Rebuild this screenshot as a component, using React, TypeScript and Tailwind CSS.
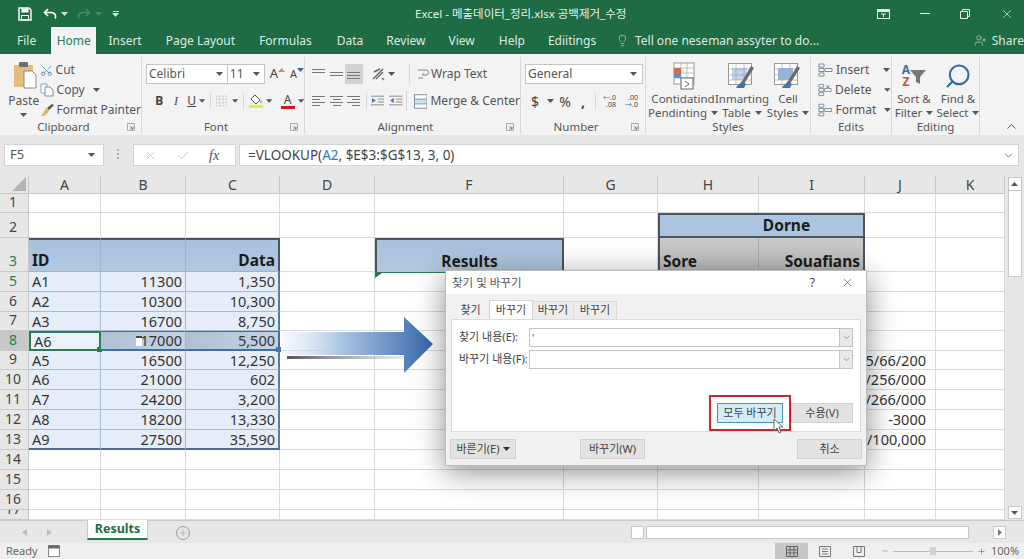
import React from 'react';
import { Scissors, Lightbulb, UserPlus, Search, ChevronUp, ChevronDown, Check, X, Minus, Plus } from 'lucide-react';

const Caret = ({ className = '', color = '#555' }: { className?: string; color?: string }) => (
  <svg width="7" height="4" viewBox="0 0 7 4" className={className}>
    <path d="M0 0h7L3.5 4z" fill={color} />
  </svg>
);

const Lines = ({ rows }: { rows: number[][] }) => (
  <svg width="14" height="12" viewBox="0 0 14 12">
    {rows.map(([x, w], i) => (
      <rect key={i} x={x} y={i * 3 + 1} width={w} height="1" fill="#777" />
    ))}
  </svg>
);

const Launcher = () => (
  <svg width="8" height="8" viewBox="0 0 8 8">
    <path d="M0.5 0.5h7v7h-7z" fill="none" stroke="#aaa" />
    <path d="M3 3l3 3M6 3.5V6H3.5" fill="none" stroke="#777" />
  </svg>
);

const Group = ({ className, label, launcher, children }: { className: string; label: string; launcher?: boolean; children: React.ReactNode }) => (
  <div className={`flex flex-col h-[77px] mt-[3px] border-r border-[#d8d8d8] shrink-0 ${className}`}>
    <div className="h-[63px] overflow-visible">{children}</div>
    <div className="h-[14px] flex items-center">
      <span className="flex-1 text-center text-[11.5px] leading-none text-[#555]">{label}</span>
      {launcher && (
        <span className="w-[14px] flex justify-start">
          <Launcher />
        </span>
      )}
    </div>
  </div>
);

const Stacked = ({ icon, lines, className }: { icon: React.ReactNode; lines: React.ReactNode[]; className: string }) => (
  <div className={`flex flex-col items-center shrink-0 ${className}`}>
    <div className="h-[33px] flex items-center">{icon}</div>
    {lines.map((l, i) => (
      <div key={i} className="h-[14px] flex items-center gap-[4px] text-[11.5px] leading-none text-[#555] whitespace-nowrap">
        {l}
      </div>
    ))}
  </div>
);

const TableGlyph = ({ accent }: { accent: string }) => (
  <svg width="30" height="28" viewBox="0 0 30 28">
    <rect x="1.5" y="1.5" width="23" height="21" fill="#fff" stroke="#999" />
    <rect x="5" y="6" width="15" height="12" fill={accent} />
    <path d="M1.5 7h23M1.5 13h23M1.5 18h23M9 1.5v21M17 1.5v21" stroke="#aaa" strokeWidth="0.7" />
    <path d="M27 6L15 25l-6 0 5-4 10-17z" fill="#6b6b6b" />
    <path d="M9 26l6-7 4 3-2 4z" fill="#3f74b5" />
  </svg>
);

const tabs = [
  ['Insert', 'ml-[12px]'],
  ['Page Layout', 'ml-[24px]'],
  ['Formulas', 'ml-[24px]'],
  ['Data', 'ml-[25px]'],
  ['Review', 'ml-[23px]'],
  ['View', 'ml-[23px]'],
  ['Help', 'ml-[24px]'],
  ['Ediitings', 'ml-[23px]'],
];

const TitleBar = () => (
  <div className="h-[27px] bg-[#1f6b43] flex items-center text-white shrink-0">
    <svg width="14" height="14" viewBox="0 0 14 14" className="ml-[18px]">
      <path d="M1 1h10l2 2v10H1z" fill="none" stroke="#fff" strokeWidth="1.4" />
      <rect x="3.5" y="1.5" width="7" height="4" fill="#fff" />
      <rect x="3.5" y="8.5" width="7" height="4.5" fill="none" stroke="#fff" />
    </svg>
    <svg width="14" height="14" viewBox="0 0 14 14" className="ml-[11px]">
      <path d="M5 2L1.5 5.5 5 9M2 5.5h6.5a4 4 0 0 1 3.5 6" fill="none" stroke="#fff" strokeWidth="1.6" />
    </svg>
    <Caret color="#cfe3d7" className="ml-[4px]" />
    <svg width="14" height="14" viewBox="0 0 14 14" className="ml-[9px]">
      <path d="M9 2l3.5 3.5L9 9M12 5.500H5.500a4 4 0 0 0-3.500 6" fill="none" stroke="#4f8a68" strokeWidth="1.6" />
    </svg>
    <Caret color="#4f8a68" className="ml-[4px]" />
    <span className="ml-[10px] flex flex-col items-center gap-[1px]">
      <span className="w-[6px] h-[1px] bg-[#cfe3d7]" />
      <Caret color="#cfe3d7" />
    </span>
    <span className="ml-[296px] text-[11.5px] text-[#e6f0ea] whitespace-nowrap w-[210px]">Excel - 메출데이터_정리.xlsx 공백제거_수정</span>
    <svg width="13" height="10" viewBox="0 0 13 10" className="ml-[252px]">
      <rect x="0.500" y="0.500" width="12" height="9" fill="none" stroke="#e6f0ea" />
      <rect x="0.500" y="0.500" width="12" height="2.500" fill="#e6f0ea" />
      <path d="M4 5h5M6.500 5v3" stroke="#e6f0ea" />
    </svg>
    <span className="ml-[30px] w-[10px] h-[1px] bg-[#e6f0ea]" />
    <svg width="10" height="10" viewBox="0 0 10 10" className="ml-[30px]">
      <path d="M2.500 2.500V.5h7v7h-2M.5 2.500h7v7h-7z" fill="none" stroke="#e6f0ea" />
    </svg>
    <X size={14} strokeWidth={1.2} className="ml-[30px] text-[#e6f0ea]" />
  </div>
);

const TabRow = () => (
  <div className="h-[27px] bg-[#1f6b43] flex items-stretch text-[12px] text-[#dcebe2] shrink-0">
    <span className="ml-[17px] w-[40px] flex items-center">File</span>
    <span className="w-[53px] bg-[#f3f3f3] text-[#2c7a50] flex items-center justify-center">Home</span>
    {tabs.map(([t, cls]) => (
      <span key={t} className={`flex items-center whitespace-nowrap ${cls}`}>
        {t}
      </span>
    ))}
    <Lightbulb size={15} strokeWidth={1.1} className="ml-[20px] self-center" />
    <span className="ml-[6px] flex items-center whitespace-nowrap w-[164px]">Tell one neseman assyter to do...</span>
    <UserPlus size={15} strokeWidth={1.1} className="ml-[175px] self-center" />
    <span className="ml-[5px] flex items-center">Share</span>
  </div>
);

const Ribbon = () => (
  <div className="h-[81px] bg-[#f3f3f3] flex shrink-0 text-[#555]">
    <Group className="w-[142px]" label="Clipboard" launcher>
      <div className="flex pl-[8px]">
        <div className="w-[36px] flex flex-col items-center">
          <svg width="26" height="28" viewBox="0 0 26 28" className="mt-[4px]">
            <rect x="3" y="4" width="19" height="22" rx="1" fill="#e6bc7c" />
            <rect x="8" y="1" width="9" height="5" rx="1" fill="#6e6e6e" />
            <path d="M13 10h8l4 4v13H13z" fill="#fff" stroke="#8a8a8a" />
          </svg>
          <span className="text-[12px] leading-none mt-[6px]">Paste</span>
          <Caret className="mt-[6px]" />
        </div>
        <div className="ml-[0px] flex flex-col text-[12px] leading-none pt-[3px]">
          <div className="h-[20px] flex items-center gap-[3px]">
            <Scissors size={13} strokeWidth={1.4} className="text-[#4d7ea8] -rotate-90" />
            <span>Cut</span>
          </div>
          <div className="h-[20px] flex items-center gap-[3px]">
            <svg width="14" height="14" viewBox="0 0 14 14">
              <path d="M1 1h6v9H1z" fill="#fff" stroke="#8aa5bd" />
              <path d="M5 4h5l3 3v6H5z" fill="#fff" stroke="#7a8a99" />
            </svg>
            <span>Copy</span>
            <Caret className="ml-[5px]" />
          </div>
          <div className="h-[19px] flex items-center gap-[2px]">
            <svg width="15" height="14" viewBox="0 0 15 14">
              <path d="M1 13c4 0 7-2 8-6L6 5C5 8 3 10 1 13z" fill="#e2b36b" />
              <path d="M7 5l2 2 5-5-2-1z" fill="#555" />
            </svg>
            <span className="whitespace-nowrap">Format Painter</span>
          </div>
        </div>
      </div>
    </Group>

    <Group className="w-[163px]" label="Font" launcher>
      <div className="pt-[7px] pl-[4px]">
        <div className="flex items-center h-[20px]">
          <div className="w-[82px] h-[20px] bg-white border border-[#c4c4c4] flex items-center justify-between px-[2px] text-[12px]">
            <span>Celibri</span>
            <Caret className="mr-[2px]" />
          </div>
          <div className="w-[37px] h-[20px] bg-white border border-l-0 border-[#c4c4c4] flex items-center justify-between px-[2px] text-[12px]">
            <span>11</span>
            <Caret className="mr-[2px]" />
          </div>
          <span className="ml-[5px] text-[13px] text-[#444]">A</span>
          <Caret color="#c99a3c" className="rotate-180 -mt-[8px]" />
          <span className="ml-[5px] text-[11px] text-[#444]">A</span>
          <Caret color="#2c6aa5" className="-mt-[8px]" />
        </div>
        <div className="flex items-center h-[18px] mt-[8px] text-[12px] text-[#444]">
          <span className="ml-[7px] w-[14px] font-bold text-center">B</span>
          <span className="ml-[4px] w-[14px] italic text-center [font-family:'Liberation_Serif',serif]">I</span>
          <span className="ml-[3px] w-[14px] underline text-center">U</span>
          <Caret className="ml-[1px]" />
          <span className="ml-[5px] w-[1px] h-[16px] bg-[#d6d6d6]" />
          <svg width="12" height="12" viewBox="0 0 12 12" className="ml-[5px]">
            <path d="M.5.5h11v11H.5zM4 .5v11M8 .5v11M.5 4h11M.5 8h11" fill="#f6f6f6" stroke="#bbb" strokeDasharray="1 1" />
          </svg>
          <Caret className="ml-[5px]" />
          <span className="ml-[5px] w-[1px] h-[16px] bg-[#d6d6d6]" />
          <span className="ml-[5px] flex flex-col items-center">
            <svg width="14" height="11" viewBox="0 0 14 11">
              <path d="M6 1l5 5-4 4-5-5z" fill="#fff" stroke="#555" />
              <path d="M12 6c1 2 1 3 0 3s-1-1 0-3z" fill="#4d7ea8" />
            </svg>
            <span className="w-[14px] h-[3px] bg-[#f2e14a]" />
          </span>
          <Caret className="ml-[3px]" />
          <span className="ml-[8px] flex flex-col items-center leading-none">
            <span className="text-[12px] leading-[12px]">A</span>
            <span className="w-[14px] h-[3px] bg-[#d2191f]" />
          </span>
          <Caret className="ml-[3px]" />
        </div>
      </div>
    </Group>

    <Group className="w-[216px]" label="Alignment" launcher>
      <div className="pt-[7px]">
        <div className="flex items-center h-[20px]">
          <span className="ml-[7px]"><Lines rows={[[0, 13], [0, 13], [0, 0]]} /></span>
          <span className="ml-[4px]"><Lines rows={[[0, 0], [0, 13], [0, 13]]} /></span>
          <span className="ml-[1px] w-[18px] h-[20px] bg-[#d2d2d2] flex items-center justify-center"><Lines rows={[[0, 0], [0, 13], [0, 13], [0, 13]]} /></span>
          <svg width="14" height="14" viewBox="0 0 14 14" className="ml-[8px]">
            <path d="M2 12L12 2M5 12l7-7M3 5l6-3" fill="none" stroke="#666" strokeWidth="1.4" />
            <path d="M11 11l2 2" stroke="#4d7ea8" strokeWidth="1.5" />
          </svg>
          <Caret className="ml-[3px]" />
          <span className="ml-[14px] w-[1px] h-[20px] bg-[#d6d6d6]" />
          <svg width="13" height="14" viewBox="0 0 13 14" className="ml-[7px]">
            <path d="M1 3h8a2 2 0 0 1 0 5H5l2-1.500M1 11h5" fill="none" stroke="#888" />
          </svg>
          <span className="ml-[1px] text-[12px] whitespace-nowrap">Wrap Text</span>
        </div>
        <div className="flex items-center h-[18px] mt-[8px]">
          <span className="ml-[7px]"><Lines rows={[[0, 13], [0, 8], [0, 13], [0, 8]]} /></span>
          <span className="ml-[4px]"><Lines rows={[[0, 13], [3, 8], [0, 13], [3, 8]]} /></span>
          <span className="ml-[3px]"><Lines rows={[[0, 13], [5, 8], [0, 13], [5, 8]]} /></span>
          <span className="ml-[5px] w-[1px] h-[16px] bg-[#d6d6d6]" />
          <svg width="14" height="12" viewBox="0 0 14 12" className="ml-[4px]">
            <path d="M0 1h14M7 4h7M7 7h7M0 10h14" stroke="#888" />
            <path d="M1 3l4 2.500L1 8z" fill="#3f7ab5" />
          </svg>
          <svg width="14" height="12" viewBox="0 0 14 12" className="ml-[5px]">
            <path d="M0 1h14M7 4h7M7 7h7M0 10h14" stroke="#888" />
            <path d="M5 3L1 5.500 5 8z" fill="#3f7ab5" />
          </svg>
          <span className="ml-[3px] w-[1px] h-[20px] bg-[#d6d6d6]" />
          <svg width="14" height="15" viewBox="0 0 14 15" className="ml-[7px]">
            <rect x=".5" y=".5" width="13" height="14" fill="#fff" stroke="#888" />
            <rect x=".5" y="5" width="13" height="5" fill="#cfe0ef" stroke="#6f9cc4" />
          </svg>
          <span className="ml-[3px] text-[12px] whitespace-nowrap">Merge &amp; Center</span>
        </div>
      </div>
    </Group>

    <Group className="w-[125px]" label="Number" launcher>
      <div className="pt-[7px] pl-[4px]">
        <div className="w-[118px] h-[20px] bg-white border border-[#c4c4c4] flex items-center justify-between px-[2px] text-[12px]">
          <span>General</span>
          <Caret className="mr-[3px]" />
        </div>
        <div className="flex items-center h-[18px] mt-[8px] text-[#444]">
          <span className="ml-[5px] w-[10px] text-[14px] text-center">$</span>
          <Caret className="ml-[7px]" />
          <span className="ml-[4px] text-[14px] w-[14px] text-center">%</span>
          <span className="ml-[9px] text-[14px] font-bold w-[6px]">,</span>
          <span className="ml-[8px] w-[1px] h-[16px] bg-[#d6d6d6]" />
          <span className="ml-[6px] w-[14px] text-[7px] leading-[7px] text-right"><span className="text-[#3f7ab5]">←</span>.0<br />.08</span>
          <span className="ml-[8px] w-[14px] text-[7px] leading-[7px] text-right">.00<br /><span className="text-[#3f7ab5]">→</span>.0</span>
        </div>
      </div>
    </Group>

    <Group className="w-[165px]" label="Styles">
      <div className="flex pl-[3px] pt-[2px]">
        <Stacked
          className="w-[68px]"
          icon={
            <svg width="30" height="30" viewBox="0 0 30 30">
              <rect x="6" y="2" width="20" height="21" fill="#fff" stroke="#999" />
              <path d="M6 7h20M6 12h20M6 17h20M13 2v21M19 2v21" stroke="#aaa" strokeWidth=".7" />
              <rect x="6" y="7" width="7" height="5" fill="#d9694a" />
              <rect x="6" y="12" width="7" height="5" fill="#5b8fc5" />
              <rect x="13" y="17" width="12" height="11" fill="#fff" stroke="#666" />
              <path d="M17 20l4 3-4 3" fill="none" stroke="#666" />
            </svg>
          }
          lines={['Contidatind', <>Pendinting <Caret /></>]}
        />
        <Stacked className="w-[50px]" icon={<TableGlyph accent="#bcd3ea" />} lines={['Inmarting', <>Table <Caret /></>]} />
        <Stacked className="w-[42px]" icon={<TableGlyph accent="#8fb7de" />} lines={['Cell', <>Styles <Caret /></>]} />
      </div>
    </Group>

    <Group className="w-[81px]" label="Edits">
      <div className="pl-[7px] pt-[3px] text-[12px] leading-none">
        {[
          ['Insert', 'ml-[11px]'],
          ['Delete', 'ml-[10px]'],
          ['Format', 'ml-[5px]'],
        ].map(([t, cls]) => (
          <div key={t} className="h-[20px] flex items-center gap-[3px]">
            <svg width="15" height="14" viewBox="0 0 15 14">
              <path d="M1 1h5v3H1zM1 5.500h5v3H1zM1 10h5v3H1zM7 5.500h7v3H7z" fill="#fff" stroke="#7a8a99" />
              {t === 'Delete' && <path d="M9 2l3 3M12 2L9 5" stroke="#c9423a" />}
            </svg>
            <span>{t}</span>
            <Caret className={cls} />
          </div>
        ))}
      </div>
    </Group>

    <Group className="w-[88px]" label="Editing">
      <div className="flex pt-[2px]">
        <Stacked
          className="w-[44px]"
          icon={
            <span className="flex items-center">
              <span className="flex flex-col items-center text-[12px] leading-[12px] font-bold">
                <span className="text-[#3570ad]">A</span>
                <span className="text-[#c0504d]">Z</span>
              </span>
              <svg width="16" height="16" viewBox="0 0 16 16">
                <path d="M0 2h16L10 9v7l-4-2V9z" fill="#777" />
              </svg>
            </span>
          }
          lines={['Sort &', <>Filter <Caret /></>]}
        />
        <Stacked
          className="w-[44px]"
          icon={<Search size={28} strokeWidth={1.8} className="text-[#2d6ca8] -scale-x-100" />}
          lines={['Find &', <>Select <Caret /></>]}
        />
      </div>
    </Group>

    <div className="flex-1 flex items-end justify-end pr-[5px] pb-[1px]">
      <ChevronUp size={15} strokeWidth={1.6} className="text-[#555]" />
    </div>
  </div>
);

const FormulaBar = () => (
  <div className="h-[41px] bg-[#e7e7e7] flex items-start pt-[9px] shrink-0">
    <div className="ml-[4px] w-[100px] h-[22px] bg-white border border-[#d4d4d4] flex items-center justify-between px-[5px] text-[13px] text-[#555]">
      <span>F5</span>
      <Caret className="mr-[3px]" />
    </div>
    <span className="ml-[13px] mt-[5px] flex flex-col gap-[2px]">
      <span className="w-[2px] h-[2px] bg-[#aaa]" />
      <span className="w-[2px] h-[2px] bg-[#aaa]" />
      <span className="w-[2px] h-[2px] bg-[#aaa]" />
    </span>
    <div className="ml-[14px] w-[103px] h-[22px] bg-white border border-[#d4d4d4] flex items-center">
      <X size={15} strokeWidth={1.5} className="ml-[9px] text-[#c4c4c4]" />
      <Check size={15} strokeWidth={1.5} className="ml-[18px] text-[#c4c4c4]" />
      <span className="ml-[18px] text-[14px] italic text-[#555] [font-family:'Liberation_Serif',serif]">fx</span>
    </div>
    <div className="ml-[3px] w-[780px] h-[22px] bg-white border border-[#d4d4d4] flex items-center justify-between pl-[8px] pr-[3px] text-[13.500px] text-[#444]">
      <span>
        =VLOOKUP(<span className="text-[#2f78b5]">A2</span>, $E$3:$G$13, 3, 0)
      </span>
      <ChevronDown size={13} strokeWidth={1.6} className="text-[#666]" />
    </div>
  </div>
);

const columns = [
  ['A', ''],
  ['B', ''],
  ['C', ''],
  ['D', ''],
  ['F', 'text-[#1f7a4a]'],
  ['G', ''],
  ['H', ''],
  ['I', ''],
  ['J', ''],
  ['K', ''],
];

const rowLabels = ['1', '2', '3', '5', '6', '7', '8', '9', '10', '11', '12', '13', '14', '15', '16', '17'];

const tableRows: Record<string, string[]> = {
  '5': ['A1', '11300', '1,350'],
  '6': ['A2', '10300', '10,300'],
  '7': ['A3', '16700', '8,750'],
  '8': ['A6', '17000', '5,500'],
  '9': ['A5', '16500', '12,250'],
  '10': ['A6', '21000', '602'],
  '11': ['A7', '24200', '3,200'],
  '12': ['A8', '18200', '13,330'],
  '13': ['A9', '27500', '35,590'],
};

const jValues: Record<string, string> = {
  '9': '5/66/200',
  '10': '/256/000',
  '11': '/266/000',
  '12': '-3000',
  '13': '/100,000',
};

const plain = 'border-r border-b border-[#d9d9d9] bg-white';
const head = 'bg-gradient-to-b from-[#a8c1dd] to-[#b2c8e0] border-b border-[#9fb3c9] border-t-2 border-t-[#4a5560] flex items-end pb-[1px] px-[3px] text-[15.500px] font-bold leading-[20px] text-[#1c1c1c]';
const grey = 'bg-gradient-to-b from-[#cbcbcb] to-[#b9b9b9] flex items-end pb-[1px] px-[3px] text-[15.500px] font-bold leading-[20px] text-[#1c1c1c]';

const tableCell = (row: string, col: number) => {
  const last = row === '13';
  if (row === '8') {
    if (col === 0) return 'relative bg-[#eaf1fa] border-2 border-[#2a7d50]';
    return `relative bg-gradient-to-r from-[#afc0d6] to-[#c4d2e3] border-t border-b-2 border-[#3f6ea5] ${col === 2 ? 'border-r-2' : 'border-r border-r-[#a5b6ca]'}`;
  }
  return `bg-[#e5edf8] border-b ${last ? 'border-b-2 border-b-[#4c6c90]' : 'border-b-[#aabbcf]'} ${col === 2 ? 'border-r-2 border-r-[#5a7a9c]' : 'border-r border-r-[#a9bbd0]'}`;
};

const Sheet = () => (
  <div className="h-[344px] flex bg-[#e7e7e7] shrink-0 overflow-hidden">
    <div className="w-[1005px] grid grid-cols-[29px_72px_85px_94px_95px_189px_94px_101px_106px_71px_69px] grid-rows-[18px_19px_25px_34px_20px_20px_19px_20px_19px_20px_20px_20px_20px_20px_20px_20px_10px]">
      <div className="bg-[#e7e7e7] border-r border-b border-[#c8c8c8] flex items-end justify-end p-[2px]">
        <svg width="14" height="14" viewBox="0 0 14 14">
          <path d="M14 0v14H0z" fill="#b4b4b4" />
        </svg>
      </div>
      {columns.map(([c, cls]) => (
        <div key={c} className={`bg-[#e7e7e7] border-r border-b border-[#c8c8c8] flex items-center justify-center text-[14px] leading-none text-[#444] ${cls}`}>
          {c}
        </div>
      ))}
      {rowLabels.map((r) => {
        const green = r === '3' || r === '5' || r === '8';
        const rowHead = `border-r border-b border-[#c8c8c8] flex items-end justify-center pr-[2px] pb-[1px] text-[14px] leading-[18px] overflow-hidden ${r === '8' ? 'bg-[#c8c8c8]' : 'bg-[#e7e7e7]'} ${green ? 'text-[#2a7d50]' : 'text-[#444]'}`;
        const data = tableRows[r];
        return (
          <React.Fragment key={r}>
            <div className={rowHead}>{r}</div>
            {r === '3' ? (
              <>
                <div className={`${head} border-r border-r-[#9fb3c9]`}>ID</div>
                <div className={`${head} border-r border-r-[#9fb3c9]`} />
                <div className={`${head} border-r-2 border-r-[#4a5560] justify-end`}>Data</div>
              </>
            ) : data ? (
              data.map((t, i) => (
                <div key={i} className={`flex items-center px-[3px] text-[14.500px] leading-none text-[#333] ${i ? 'justify-end' : ''} ${tableCell(r, i)}`}>
                  {r === '8' && i === 1 && <span className="w-[6px] h-[10px] bg-white border-t-2 border-[#444] mr-[-1px]" />}
                  {t}
                  {r === '8' && i === 0 && <span className="absolute -right-[3px] -bottom-[3px] w-[5px] h-[5px] bg-[#2a7d50]" />}
                  {r === '8' && i === 2 && <span className="absolute -right-[3px] -bottom-[3px] w-[5px] h-[5px] bg-[#4b76ad]" />}
                </div>
              ))
            ) : (
              <>
                <div className={plain} />
                <div className={plain} />
                <div className={plain} />
              </>
            )}
            <div className={plain} />
            {r === '3' ? (
              <div className="bg-gradient-to-b from-[#a8c1dd] to-[#b2c8e0] border-2 border-b-0 border-[#4a5560] flex items-end justify-center pb-[1px] text-[15.500px] font-bold leading-[20px] text-[#1c1c1c]">Results</div>
            ) : r === '5' ? (
              <div className={`relative ${plain} border-t border-t-[#2a7d50]`}>
                <svg width="7" height="5" viewBox="0 0 7 5" className="absolute left-0 top-0">
                  <path d="M0 0h7L0 5z" fill="#1f7a4a" />
                </svg>
              </div>
            ) : (
              <div className={plain} />
            )}
            <div className={plain} />
            {r === '2' ? (
              <div className="col-span-2 bg-[#abc4e0] border-2 border-[#4a5560] flex items-center justify-center pl-[50px] text-[15.500px] font-bold text-[#1c1c1c]">Dorne</div>
            ) : r === '3' ? (
              <>
                <div className={`${grey} border-l-2 border-l-[#4a5560] border-r border-r-[#a8a8a8]`}>Sore</div>
                <div className={`${grey} border-r-2 border-r-[#4a5560] justify-end`}>Souafians</div>
              </>
            ) : (
              <>
                <div className={plain} />
                <div className={plain} />
              </>
            )}
            <div className={`${plain} flex items-center justify-end pr-[9px] text-[14.500px] leading-none text-[#333] whitespace-nowrap`}>{jValues[r]}</div>
            <div className={plain} />
          </React.Fragment>
        );
      })}
    </div>
    <div className="w-[19px] flex flex-col items-center pt-[1px] pb-[1px]">
      <div className="w-[14px] h-[14px] bg-white border border-[#c8c8c8] flex items-center justify-center">
        <Caret className="rotate-180" />
      </div>
      <div className="w-[14px] h-[86px] bg-white border border-[#c8c8c8] border-t-0" />
      <div className="flex-1" />
      <div className="w-[14px] h-[13px] bg-white border border-[#c8c8c8] flex items-center justify-center">
        <Caret />
      </div>
    </div>
  </div>
);

const SheetTabs = () => (
  <div className="h-[23px] bg-[#e7e7e7] flex items-start shrink-0 border-t border-[#c8c8c8]">
    <svg width="5" height="7" viewBox="0 0 5 7" className="ml-[22px] mt-[8px]"><path d="M5 0v7L0 3.500z" fill="#bbb" /></svg>
    <svg width="5" height="7" viewBox="0 0 5 7" className="ml-[20px] mt-[8px]"><path d="M0 0v7l5-3.500z" fill="#bbb" /></svg>
    <div className="ml-[35px] w-[61px] h-[20px] bg-white border-x border-[#c8c8c8] border-b-2 border-b-[#1f7a4a] flex items-center justify-center text-[12.500px] font-bold text-[#1f6b43] -mt-[1px]">Results</div>
    <span className="ml-[28px] mt-[5px] w-[14px] h-[14px] rounded-full border border-[#999] flex items-center justify-center">
      <Plus size={10} strokeWidth={1.2} className="text-[#888]" />
    </span>
    <span className="ml-[441px] mt-[5px] w-[13px] h-[13px] bg-white border border-[#c8c8c8]" />
    <div className="ml-[2px] mt-[5px] w-[323px] h-[13px] bg-white border border-[#c8c8c8]" />
    <span className="ml-[24px] mt-[5px] w-[13px] h-[13px] bg-white border border-[#c8c8c8] flex items-center justify-center">
      <svg width="4" height="7" viewBox="0 0 4 7"><path d="M0 0v7l4-3.500z" fill="#777" /></svg>
    </span>
  </div>
);

const StatusBar = () => (
  <div className="h-[16px] bg-[#efefef] flex items-center text-[11px] text-[#666] shrink-0">
    <span className="ml-[6px] w-[42px]">Ready</span>
    <svg width="12" height="12" viewBox="0 0 12 12">
      <rect x=".5" y=".5" width="11" height="11" fill="#fff" stroke="#888" />
      <rect x=".5" y=".5" width="11" height="3" fill="#666" />
    </svg>
    <span className="ml-[715px] w-[33px] h-[16px] bg-[#c6c6c6] flex items-center justify-center">
      <svg width="12" height="11" viewBox="0 0 12 11"><path d="M.5.5h11v10H.5zM4 .5v10M8 .5v10M.5 4h11M.5 7h11" fill="none" stroke="#666" /></svg>
    </span>
    <svg width="12" height="11" viewBox="0 0 12 11" className="ml-[11px]"><path d="M.5.5h11v10H.5zM3 3h6M3 5.500h6M3 8h6" fill="none" stroke="#777" /></svg>
    <svg width="12" height="11" viewBox="0 0 12 11" className="ml-[22px]"><path d="M.5.5h11v10H.5zM4 .5v6h4v-6" fill="none" stroke="#777" /></svg>
    <Minus size={8} strokeWidth={1.5} className="ml-[16px]" />
    <span className="ml-[4px] w-[80px] h-[1px] bg-[#bbb] flex items-center justify-center">
      <span className="w-[6px] h-[8px] bg-[#d0d0d0]" />
    </span>
    <Plus size={9} strokeWidth={1.5} className="ml-[4px]" />
    <span className="ml-[5px]">100%</span>
  </div>
);

const DialogButton = ({ className, children }: { className: string; children: React.ReactNode }) => (
  <div className={`h-[20px] flex items-center justify-center text-[11px] text-[#444] whitespace-nowrap shrink-0 ${className}`}>{children}</div>
);

const Dialog = () => (
  <div className="absolute left-[445px] top-[270px] w-[422px] h-[196px] bg-[#f1f1f1] border border-[#bdbdbd] shadow-[0_6px_28px_rgba(0,0,0,0.45)] flex flex-col text-[11px] text-[#444]">
    <div className="h-[23px] bg-white flex items-center shrink-0">
      <span className="ml-[6px] text-[11.500px] text-[#555]">찾기 및 바꾸기</span>
      <span className="ml-auto text-[12px]">?</span>
      <X size={13} strokeWidth={1.1} className="ml-[26px] mr-[12px]" />
    </div>
    <div className="flex h-[25px] items-end pl-[6px] shrink-0">
      <span className="w-[37px] h-[18px] flex items-center justify-center">찾기</span>
      <span className="w-[44px] h-[19px] bg-white border border-b-0 border-[#d0d0d0] flex items-center justify-center">바꾸기</span>
      <span className="w-[41px] h-[18px] bg-[#ececec] border-r border-t border-[#d8d8d8] flex items-center justify-center">바꾸기</span>
      <span className="w-[43px] h-[18px] bg-[#ececec] border-r border-t border-[#d8d8d8] flex items-center justify-center">바꾸기</span>
    </div>
    <div className="mx-[5px] h-[113px] bg-white border border-[#dcdcdc] flex flex-col px-[7px] pt-[8px] shrink-0">
      {['찾기 내용(E):', '바꾸기 내용(F):'].map((l, i) => (
        <div key={l} className="flex items-center h-[19px] mb-[3px]">
          <span className="w-[72px] whitespace-nowrap">{l}</span>
          <div className="w-[324px] h-[19px] bg-white border border-[#c4c4c4] flex items-center justify-between shrink-0">
            <span className="pl-[2px] text-[10px] leading-none">{i === 0 ? "'" : ''}</span>
            <span className="w-[13px] h-full bg-[#e9e9e9] border-l border-[#c4c4c4] flex items-center justify-center">
              <ChevronDown size={9} strokeWidth={1.4} />
            </span>
          </div>
        </div>
      ))}
      <div className="flex justify-end mt-[31px] gap-[8px]">
        <DialogButton className="w-[66px] bg-[#d3ecf8] border border-[#4a93b8] outline-2 outline-offset-[6px] outline-[#c8262c]">모두 바꾸기</DialogButton>
        <DialogButton className="w-[62px] bg-[#e2e2e2] border border-[#d0d0d0]">수용(V)</DialogButton>
      </div>
    </div>
    <div className="flex items-start mt-[7px] pl-[4px]">
      <DialogButton className="w-[66px] bg-[#e2e2e2] border border-[#d0d0d0] gap-[3px]">
        바른기(E)
        <Caret color="#333" />
      </DialogButton>
      <DialogButton className="ml-[64px] w-[65px] bg-[#e2e2e2] border border-[#d0d0d0]">바꾸기(W)</DialogButton>
      <DialogButton className="ml-[152px] w-[65px] bg-[#e2e2e2] border border-[#d0d0d0]">취소</DialogButton>
    </div>
  </div>
);

export default function App() {
  return (
    <div className="relative w-[1024px] h-[559px] overflow-hidden flex flex-col bg-white [font-family:'Noto_Sans','Noto_Sans_CJK_KR',sans-serif]">
      <TitleBar />
      <TabRow />
      <Ribbon />
      <FormulaBar />
      <Sheet />
      <SheetTabs />
      <StatusBar />

      {/* big arrow lying over the cells */}
      <svg width="156" height="60" viewBox="0 0 156 60" className="absolute left-[282px] top-[316px]">
        <defs>
          <linearGradient id="shaft" x1="0" x2="1" y1="0" y2="0">
            <stop offset="0" stopColor="#dfe8f5" stopOpacity="0.3" />
            <stop offset="0.4" stopColor="#a9c2e2" />
            <stop offset="1" stopColor="#3566a8" />
          </linearGradient>
          <linearGradient id="shade" x1="0" x2="1" y1="0" y2="0">
            <stop offset="0" stopColor="#555" />
            <stop offset="1" stopColor="#999" stopOpacity="0.2" />
          </linearGradient>
        </defs>
        <rect x="5" y="40" width="118" height="3" fill="url(#shade)" />
        <path d="M0 16H122V1L151 28 122 57V39H0z" fill="url(#shaft)" />
      </svg>

      <Dialog />

      {/* mouse pointer on the button */}
      <svg width="12" height="17" viewBox="0 0 12 17" className="absolute left-[773px] top-[418px]">
        <path d="M1 1v12l3-3 2 5 2-1-2-5h4z" fill="#fff" stroke="#444" strokeWidth="0.8" />
      </svg>
    </div>
  );
}
